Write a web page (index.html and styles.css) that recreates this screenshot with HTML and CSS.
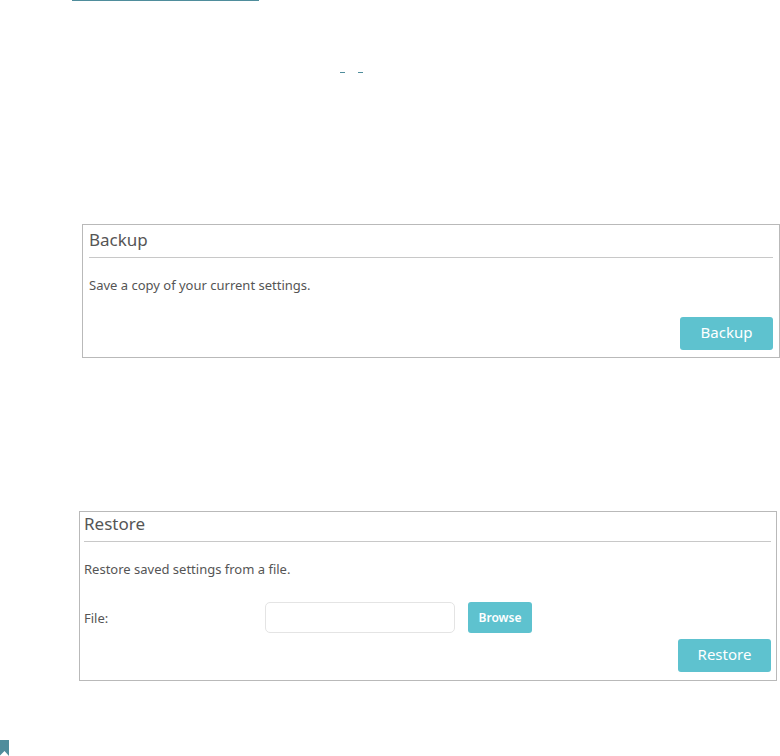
FILE: index.html
```html
<!DOCTYPE html>
<html lang="en">
<head>
<meta charset="utf-8">
<title>Backup &amp; Restore</title>
<link rel="stylesheet" href="styles.css">
</head>
<body>
<main class="page">
  <div class="rule"></div>
  <div class="marks"><span class="mark"></span><span class="mark"></span></div>
  <section class="panel backup">
    <h2 class="title">Backup</h2>
    <p class="text">Save a copy of your current settings.</p>
    <div class="actions"><button class="button" type="button">Backup</button></div>
  </section>
  <section class="panel restore">
    <h2 class="title">Restore</h2>
    <p class="text">Restore saved settings from a file.</p>
    <div class="field">
      <label class="label" for="file">File:</label>
      <input class="input" id="file" type="text">
      <button class="button browse" type="button">Browse</button>
    </div>
    <div class="actions"><button class="button" type="button">Restore</button></div>
  </section>
  <svg class="bookmark" width="9" height="16" viewBox="0 0 9 16" aria-hidden="true"><path d="M0 0H9V16L4.500 11L0 15.500Z" fill="#4f8d9c"/></svg>
</main>
</body>
</html>
```
FILE: styles.css
```css
* {
  box-sizing: border-box;
}

body {
  margin: 0;
  background: #fff;
  color: #555;
  font-family: "Noto Sans", "Open Sans", sans-serif;
}

.page {
  display: flex;
  flex-direction: column;
}

.rule {
  width: 187px;
  height: 1px;
  margin-left: 72px;
  background: #4f8d9c;
}

.marks {
  display: flex;
  gap: 13px;
  margin: 71px 0 151px 340px;
}

.mark {
  width: 5px;
  height: 1px;
  background: #4f8d9c;
}

.panel {
  border: 1px solid #b9b9b9;
}

.backup {
  margin-left: 82px;
  padding: 0 6px 7px;
}

.restore {
  margin: 153px 3px 0 79px;
  padding: 0 5px 8px 4px;
}

.title {
  margin: 0;
  padding-bottom: 2px;
  border-bottom: 1px solid #c8c8c8;
  font-size: 17px;
  font-weight: 400;
  line-height: 30px;
}

.restore .title {
  padding-bottom: 5px;
  line-height: 24px;
}

.text {
  margin: 18px 0 0;
  font-size: 13px;
  line-height: 18px;
}

.actions {
  display: flex;
  justify-content: flex-end;
  margin-top: 23px;
}

.restore .actions {
  margin-top: 6px;
}

.button {
  width: 93px;
  height: 33px;
  padding: 0 0 3px;
  border: 0;
  border-radius: 3px;
  background: #5ec2cf;
  color: #fff;
  font: 15px "Noto Sans", "Open Sans", sans-serif;
}

.field {
  display: flex;
  align-items: center;
  margin-top: 24px;
}

.label {
  width: 181px;
  font-size: 13px;
  line-height: 20px;
}

.input {
  width: 190px;
  height: 31px;
  padding: 0 8px;
  border: 1px solid #e4e4e4;
  border-radius: 5px;
  background: #fff;
  color: #555;
  font: 13px "Noto Sans", "Open Sans", sans-serif;
}

.browse {
  width: 64px;
  height: 31px;
  margin-left: 13px;
  padding: 0;
  font-size: 12px;
  font-weight: 600;
}

.bookmark {
  display: block;
  margin-top: 59px;
}
```
